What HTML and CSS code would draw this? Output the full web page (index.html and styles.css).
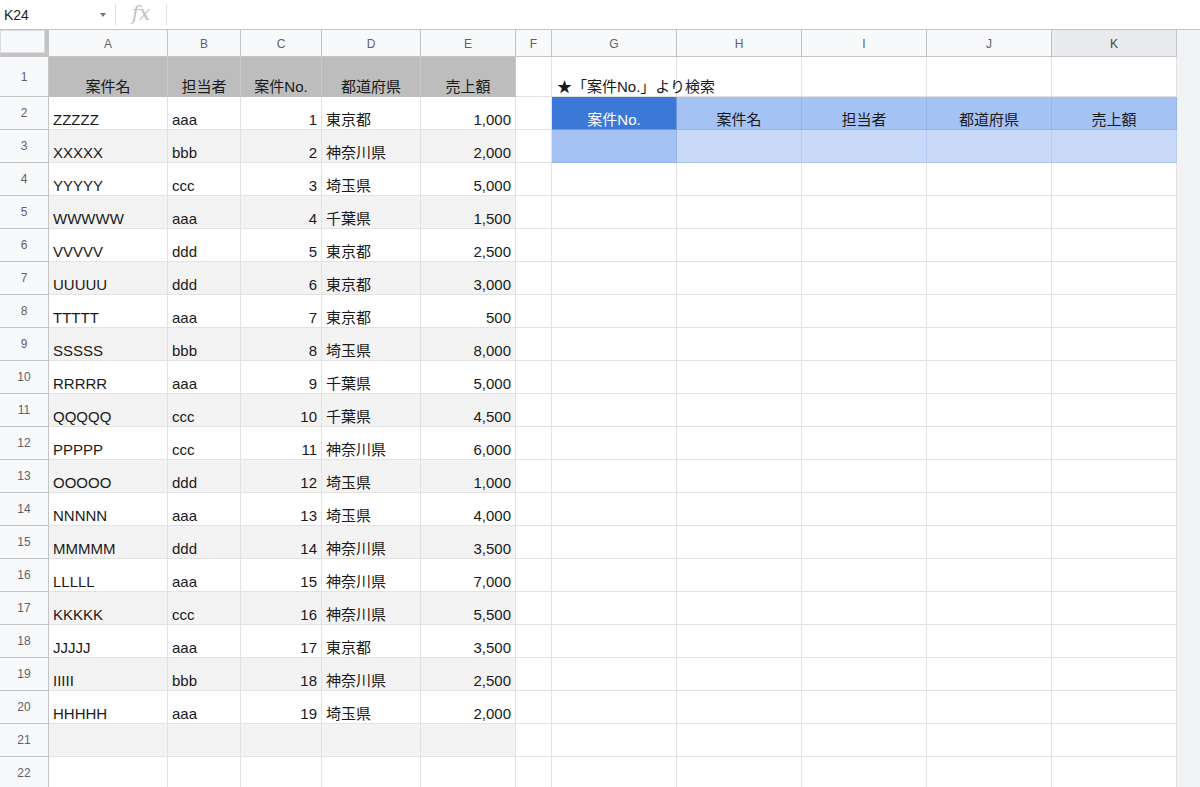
FILE: index.html
```html
<!DOCTYPE html>
<html lang="ja">
<head>
<meta charset="utf-8">
<link rel="stylesheet" href="styles.css">
</head>
<body>
<div class="formula-bar">
  <div class="name-box"><span class="ref">K24</span><span class="caret"></span></div>
  <div class="sep"></div>
  <div class="fx">fx</div>
  <div class="sep"></div>
  <div class="formula"></div>
</div>
<div class="sheet-wrap">
<div class="sheet">
  <div class="corner"></div>
  <div class="ch">A</div><div class="ch">B</div><div class="ch">C</div><div class="ch">D</div><div class="ch">E</div><div class="ch">F</div><div class="ch">G</div><div class="ch">H</div><div class="ch">I</div><div class="ch">J</div><div class="ch active">K</div>

  <div class="rh">1</div>
  <div class="c hd center">案件名</div><div class="c hd center">担当者</div><div class="c hd center">案件No.</div><div class="c hd center">都道府県</div><div class="c hd center">売上額</div>
  <div class="c"></div><div class="c overflow">★「案件No.」より検索</div><div class="c"></div><div class="c"></div><div class="c"></div><div class="c"></div>

  <div class="rh">2</div>
  <div class="c">ZZZZZ</div><div class="c">aaa</div><div class="c num">1</div><div class="c">東京都</div><div class="c num">1,000</div>
  <div class="c"></div><div class="c center sel-hd">案件No.</div><div class="c center blue-hd">案件名</div><div class="c center blue-hd">担当者</div><div class="c center blue-hd">都道府県</div><div class="c center blue-hd">売上額</div>

  <div class="rh">3</div>
  <div class="c alt">XXXXX</div><div class="c alt">bbb</div><div class="c alt num">2</div><div class="c alt">神奈川県</div><div class="c alt num">2,000</div>
  <div class="c"></div><div class="c blue-mid"></div><div class="c blue-lt"></div><div class="c blue-lt"></div><div class="c blue-lt"></div><div class="c blue-lt"></div>

  <div class="rh">4</div>
  <div class="c">YYYYY</div><div class="c">ccc</div><div class="c num">3</div><div class="c">埼玉県</div><div class="c num">5,000</div>
  <div class="c"></div><div class="c"></div><div class="c"></div><div class="c"></div><div class="c"></div><div class="c"></div>

  <div class="rh">5</div>
  <div class="c alt">WWWWW</div><div class="c alt">aaa</div><div class="c alt num">4</div><div class="c alt">千葉県</div><div class="c alt num">1,500</div>
  <div class="c"></div><div class="c"></div><div class="c"></div><div class="c"></div><div class="c"></div><div class="c"></div>

  <div class="rh">6</div>
  <div class="c">VVVVV</div><div class="c">ddd</div><div class="c num">5</div><div class="c">東京都</div><div class="c num">2,500</div>
  <div class="c"></div><div class="c"></div><div class="c"></div><div class="c"></div><div class="c"></div><div class="c"></div>

  <div class="rh">7</div>
  <div class="c alt">UUUUU</div><div class="c alt">ddd</div><div class="c alt num">6</div><div class="c alt">東京都</div><div class="c alt num">3,000</div>
  <div class="c"></div><div class="c"></div><div class="c"></div><div class="c"></div><div class="c"></div><div class="c"></div>

  <div class="rh">8</div>
  <div class="c">TTTTT</div><div class="c">aaa</div><div class="c num">7</div><div class="c">東京都</div><div class="c num">500</div>
  <div class="c"></div><div class="c"></div><div class="c"></div><div class="c"></div><div class="c"></div><div class="c"></div>

  <div class="rh">9</div>
  <div class="c alt">SSSSS</div><div class="c alt">bbb</div><div class="c alt num">8</div><div class="c alt">埼玉県</div><div class="c alt num">8,000</div>
  <div class="c"></div><div class="c"></div><div class="c"></div><div class="c"></div><div class="c"></div><div class="c"></div>

  <div class="rh">10</div>
  <div class="c">RRRRR</div><div class="c">aaa</div><div class="c num">9</div><div class="c">千葉県</div><div class="c num">5,000</div>
  <div class="c"></div><div class="c"></div><div class="c"></div><div class="c"></div><div class="c"></div><div class="c"></div>

  <div class="rh">11</div>
  <div class="c alt">QQQQQ</div><div class="c alt">ccc</div><div class="c alt num">10</div><div class="c alt">千葉県</div><div class="c alt num">4,500</div>
  <div class="c"></div><div class="c"></div><div class="c"></div><div class="c"></div><div class="c"></div><div class="c"></div>

  <div class="rh">12</div>
  <div class="c">PPPPP</div><div class="c">ccc</div><div class="c num">11</div><div class="c">神奈川県</div><div class="c num">6,000</div>
  <div class="c"></div><div class="c"></div><div class="c"></div><div class="c"></div><div class="c"></div><div class="c"></div>

  <div class="rh">13</div>
  <div class="c alt">OOOOO</div><div class="c alt">ddd</div><div class="c alt num">12</div><div class="c alt">埼玉県</div><div class="c alt num">1,000</div>
  <div class="c"></div><div class="c"></div><div class="c"></div><div class="c"></div><div class="c"></div><div class="c"></div>

  <div class="rh">14</div>
  <div class="c">NNNNN</div><div class="c">aaa</div><div class="c num">13</div><div class="c">埼玉県</div><div class="c num">4,000</div>
  <div class="c"></div><div class="c"></div><div class="c"></div><div class="c"></div><div class="c"></div><div class="c"></div>

  <div class="rh">15</div>
  <div class="c alt">MMMMM</div><div class="c alt">ddd</div><div class="c alt num">14</div><div class="c alt">神奈川県</div><div class="c alt num">3,500</div>
  <div class="c"></div><div class="c"></div><div class="c"></div><div class="c"></div><div class="c"></div><div class="c"></div>

  <div class="rh">16</div>
  <div class="c">LLLLL</div><div class="c">aaa</div><div class="c num">15</div><div class="c">神奈川県</div><div class="c num">7,000</div>
  <div class="c"></div><div class="c"></div><div class="c"></div><div class="c"></div><div class="c"></div><div class="c"></div>

  <div class="rh">17</div>
  <div class="c alt">KKKKK</div><div class="c alt">ccc</div><div class="c alt num">16</div><div class="c alt">神奈川県</div><div class="c alt num">5,500</div>
  <div class="c"></div><div class="c"></div><div class="c"></div><div class="c"></div><div class="c"></div><div class="c"></div>

  <div class="rh">18</div>
  <div class="c">JJJJJ</div><div class="c">aaa</div><div class="c num">17</div><div class="c">東京都</div><div class="c num">3,500</div>
  <div class="c"></div><div class="c"></div><div class="c"></div><div class="c"></div><div class="c"></div><div class="c"></div>

  <div class="rh">19</div>
  <div class="c alt">IIIII</div><div class="c alt">bbb</div><div class="c alt num">18</div><div class="c alt">神奈川県</div><div class="c alt num">2,500</div>
  <div class="c"></div><div class="c"></div><div class="c"></div><div class="c"></div><div class="c"></div><div class="c"></div>

  <div class="rh">20</div>
  <div class="c">HHHHH</div><div class="c">aaa</div><div class="c num">19</div><div class="c">埼玉県</div><div class="c num">2,000</div>
  <div class="c"></div><div class="c"></div><div class="c"></div><div class="c"></div><div class="c"></div><div class="c"></div>

  <div class="rh">21</div>
  <div class="c alt"></div><div class="c alt"></div><div class="c alt"></div><div class="c alt"></div><div class="c alt"></div>
  <div class="c"></div><div class="c"></div><div class="c"></div><div class="c"></div><div class="c"></div><div class="c"></div>

  <div class="rh">22</div>
  <div class="c"></div><div class="c"></div><div class="c"></div><div class="c"></div><div class="c"></div>
  <div class="c"></div><div class="c"></div><div class="c"></div><div class="c"></div><div class="c"></div><div class="c"></div>
</div>
<div class="filler"></div>
</div>
</body>
</html>
```
FILE: styles.css
```css
html, body {
  margin: 0;
  padding: 0;
  height: 787px;
  overflow: hidden;
  background: #ffffff;
  font-family: "Liberation Sans", Arial, "Noto Sans CJK JP", sans-serif;
  color: #222222;
}

.formula-bar {
  height: 29px;
  border-bottom: 1px solid #c4c4c4;
  display: flex;
  align-items: center;
  background: #ffffff;
}

.name-box {
  width: 115px;
  display: flex;
  align-items: center;
  justify-content: space-between;
  padding: 0 9px 0 4px;
  box-sizing: border-box;
}

.ref {
  font-size: 14px;
  color: #1f1f1f;
}

.caret {
  width: 0;
  height: 0;
  border-left: 3.5px solid transparent;
  border-right: 3.5px solid transparent;
  border-top: 4px solid #777777;
}

.sep {
  width: 1px;
  height: 21px;
  background: #e0e0e0;
}

.fx {
  width: 50px;
  text-align: center;
  font-family: "DejaVu Serif", "Liberation Serif", serif;
  font-style: italic;
  font-size: 20px;
  color: #c2c2c2;
  line-height: 22px;
  margin-top: -3px;
}

.formula {
  flex: 1;
}

.sheet-wrap {
  display: flex;
  height: 757px;
  overflow: hidden;
}

.sheet {
  display: grid;
  grid-template-columns: 49px 119px 73px 81px 99px 95px 36px 125px 125px 125px 125px 125px;
  grid-template-rows: 27px 40px repeat(21, 33px);
  width: 1177px;
  flex: none;
}

.filler {
  flex: 1;
  background: #f1f3f4;
}

.corner {
  background: #f8f9fa;
  border-right: 4px solid #c4c4c4;
  border-bottom: 4px solid #c4c4c4;
  box-shadow: inset 0 0 0 1px #dadce0;
  box-sizing: border-box;
}

.ch {
  background: #f8f9fa;
  border-right: 1px solid #c4c4c4;
  border-bottom: 1px solid #c4c4c4;
  box-sizing: border-box;
  display: flex;
  align-items: center;
  justify-content: center;
  font-size: 12px;
  color: #5f6368;
  padding-top: 1px;
}

.ch.active {
  background: #e8eaed;
  color: #444444;
}

.rh {
  background: #f8f9fa;
  border-right: 1px solid #c4c4c4;
  border-bottom: 1px solid #c4c4c4;
  box-sizing: border-box;
  display: flex;
  align-items: center;
  justify-content: center;
  font-size: 12px;
  color: #5f6368;
}

.c {
  border-right: 1px solid #e2e2e2;
  border-bottom: 1px solid #e2e2e2;
  box-sizing: border-box;
  display: flex;
  align-items: flex-end;
  justify-content: flex-start;
  padding: 0 4px 0 4px;
  font-size: 15px;
  line-height: 18px;
  color: #1a1a1a;
  white-space: nowrap;
  min-width: 0;
}

.c.num {
  justify-content: flex-end;
}

.c.center {
  justify-content: center;
}

.c.alt {
  background: #f3f3f3;
}

.c.hd {
  background: #bdbdbd;
  border-right-color: #c9c9c9;
  border-bottom-color: #bdbdbd;
}

.c.overflow {
  overflow: visible;
  position: relative;
  z-index: 1;
  padding-left: 5px;
}

.c.sel-hd {
  background: #3c78d8;
  color: #ffffff;
  border-right-color: #6d98e0;
  border-bottom-color: #6d98e0;
}

.c.blue-hd {
  background: #a4c2f4;
  border-right-color: #93b5ee;
  border-bottom-color: #93b5ee;
}

.c.blue-mid {
  background: #a4c2f4;
  border-right-color: #93b5ee;
  border-bottom-color: #93b5ee;
}

.c.blue-lt {
  background: #c9daf8;
  border-right-color: #b4cbf3;
  border-bottom-color: #a9c3f0;
}
```
